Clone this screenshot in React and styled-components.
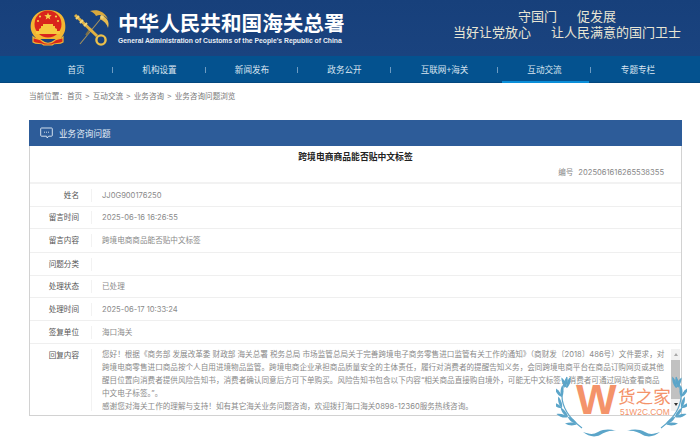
import React from 'react';
import styled, { createGlobalStyle } from 'styled-components';

const GlobalStyle = createGlobalStyle`
  html, body {
    margin: 0;
    padding: 0;
    background: #fff;
    overflow: hidden;
  }
  body {
    font-family: "Noto Sans CJK SC", "Noto Sans", sans-serif;
  }
`;

const navItems = ['首页', '机构设置', '新闻发布', '政务公开', '互联网+海关', '互动交流', '专题专栏'];

const crumbs = ['首页', '互动交流', '业务咨询', '业务咨询问题浏览'];

const rows = [
  { label: '姓名', value: 'JJ0G900176250', h: 23 },
  { label: '留言时间', value: '2025-06-16 16:26:55', h: 22 },
  { label: '留言内容', value: '跨境电商商品能否贴中文标签', h: 24 },
  { label: '问题分类', value: '', h: 23 },
  { label: '处理状态', value: '已处理', h: 22 },
  { label: '处理时间', value: '2025-06-17 10:33:24', h: 23 },
  { label: '签复单位', value: '海口海关', h: 23 },
];

// x, y, angle of each leaf on the left branch of the wreath
const leaves = [
  [11, 18, -72], [6, 27, -88], [6, 38, -108], [12, 47, -128], [21, 54, -142],
  [11, 18, -118], [6, 27, -128], [6, 38, -150], [12, 47, -165], [21, 54, -178],
];

const Emblem = () => (
  <svg width="37" height="38" viewBox="0 0 37 38">
    <path d="M7 30 C1 25 0 19 1 14 C3 5 10 1 18 1 C27 1 34 5 35 14 C36 20 35 25 30 30 Z" fill="#f2b632" />
    <circle cx="18" cy="15" r="13.5" fill="#d9251c" />
    <path d="M18 3.5l1 2.6 2.7.1-2.1 1.7.7 2.6-2.3-1.5-2.3 1.5.7-2.6-2.1-1.7 2.7-.1z" fill="#f6d14a" />
    <circle cx="10" cy="7.5" r="1.1" fill="#f6d14a" />
    <circle cx="26" cy="7.5" r="1.1" fill="#f6d14a" />
    <circle cx="8" cy="12" r="1.1" fill="#f6d14a" />
    <circle cx="28" cy="12" r="1.1" fill="#f6d14a" />
    <path d="M9 22h18v-2l-2-1v-2h-2v-2H13v2h-2v2l-2 1z" fill="#f6c93f" />
    <rect x="6" y="22" width="24" height="3" fill="#f6c93f" />
    <path d="M3 28 C6 31 10 29 12 32 C15 35 21 35 24 32 C26 29 30 31 33 28 L33 33 C29 36 25 33 22 36 L14 36 C11 33 7 36 3 33 Z" fill="#d9251c" stroke="#f2b632" strokeWidth="1.2" />
  </svg>
);

const CustomsKey = () => (
  <svg width="37" height="38" viewBox="0 0 37 38" fill="none">
    <path d="M29 7 L6 35" stroke="#a8935c" strokeWidth="1.1" />
    <path d="M17 19 L12 26" stroke="#7d7048" strokeWidth="2" />
    <path d="M1 6 L23 27" stroke="#e0b143" strokeWidth="3" />
    <path d="M2 10l3-3M6 14l3-3M10 17l3-3" stroke="#f3d576" strokeWidth="2" />
    <circle cx="27" cy="31" r="4.6" stroke="#ecc04a" strokeWidth="2.4" />
    <path d="M16 2 C23 0 30 2 34 10 C30 6 26 5 22 7 C21 5 19 3 16 2 Z" fill="#d9a93c" />
    <path d="M27 6 C33 8 36 13 34 19 C33 15 30 12 26 10 Z" fill="#e6bb50" />
    <circle cx="28" cy="8" r="1.8" fill="#f3d576" />
  </svg>
);

const ChatIcon = () => (
  <svg width="13" height="12" viewBox="0 0 13 12" fill="none">
    <path d="M1.5 1h10a.8.8 0 0 1 .8.8v6.6a.8.8 0 0 1-.8.8H8.6L7.2 11 6.6 9.2H1.5a.8.8 0 0 1-.8-.8V1.8a.8.8 0 0 1 .8-.8z" stroke="#e6eef7" strokeWidth="0.9" />
    <path d="M4 5.2h1M6 5.2h1M8 5.2h1" stroke="#e6eef7" strokeWidth="0.9" />
  </svg>
);

const Laurel = ({ flip }) => (
  <svg width="66" height="72" viewBox="0 0 66 72" fill="none" style={flip ? { transform: 'scaleX(-1)' } : undefined}>
    <path d="M11 7 C3 22 2 40 26 58" stroke="#5ba5c9" strokeWidth="1.2" />
    <path d="M11 7 C9 11 8 14 8 18 C11 15 13 11 11 7Z" fill="#5ba5c9" />
    {leaves.map(([x, y, a]) => (
      <path key={`${x}-${a}`} d="M0 0 C3 -2.2 8 -2.2 12 0 C8 1.8 3 1.8 0 0Z" fill="#5ba5c9" transform={`translate(${x} ${y}) rotate(${a})`} />
    ))}
    <path d="M27 62 C33 64 37 65 42 62 C48 59 54 59 60 61 C54 60 49 62 44 65 C38 68 32 66 27 62Z" fill="#5ba5c9" />
  </svg>
);

const App = () => (
  <Page>
    <GlobalStyle />
    <Header>
      <Logos>
        <Emblem />
        <CustomsKey />
      </Logos>
      <Brand>
        <BrandName>中华人民共和国海关总署</BrandName>
        <BrandEnglish>General Administration of Customs of the People's Republic of China</BrandEnglish>
      </Brand>
      <Slogan>
        <SloganLine $indent="65px">守国门<SloganGap />促发展</SloganLine>
        <SloganLine>当好让党放心<SloganGap />让人民满意的国门卫士</SloganLine>
      </Slogan>
    </Header>
    <Nav>
      {navItems.map((item, i) => (
        <NavItem key={item} $active={i === 5} $last={i === navItems.length - 1}>{item}</NavItem>
      ))}
    </Nav>
    <Breadcrumb>
      当前位置：
      {crumbs.map((crumb, i) => (
        <React.Fragment key={crumb}>
          {i > 0 && <CrumbSep>&gt;</CrumbSep>}
          <span>{crumb}</span>
        </React.Fragment>
      ))}
    </Breadcrumb>
    <Card>
      <CardHead>
        <ChatIcon />
        <span>业务咨询问题</span>
      </CardHead>
      <TitleBlock>
        <Title>跨境电商商品能否贴中文标签</Title>
        <Serial>编号<SerialNo>2025061616265538355</SerialNo></Serial>
      </TitleBlock>
      {rows.map((row) => (
        <Row key={row.label} $h={row.h}>
          <Label>{row.label}</Label>
          <Value>{row.value}</Value>
        </Row>
      ))}
      <ReplyRow>
        <Label>回复内容</Label>
        <ReplyBox>
          <ReplyText>
            <ReplyLine>您好！根据《商务部 发展改革委 财政部 海关总署 税务总局 市场监管总局关于完善跨境电子商务零售进口监管有关工作的通知》（商财发〔2018〕486号）文件要求，对</ReplyLine>
            <ReplyLine>跨境电商零售进口商品按个人自用进境物品监管。跨境电商企业承担商品质量安全的主体责任，履行对消费者的提醒告知义务，会同跨境电商平台在商品订购网页或其他</ReplyLine>
            <ReplyLine>醒目位置向消费者提供风险告知书，消费者确认同意后方可下单购买。风险告知书包含以下内容“相关商品直接购自境外，可能无中文标签，消费者可通过网站查看商品</ReplyLine>
            <ReplyLine>中文电子标签。”。</ReplyLine>
            <ReplyLine>感谢您对海关工作的理解与支持！如有其它海关业务问题咨询，欢迎拨打海口海关0898-12360服务热线咨询。</ReplyLine>
          </ReplyText>
          <ScrollBar>
            <ArrowUp />
            <Thumb />
            <ArrowDown />
          </ScrollBar>
        </ReplyBox>
      </ReplyRow>
    </Card>
    <Watermark>
      <WreathLeft><Laurel /></WreathLeft>
      <WreathRight><Laurel flip /></WreathRight>
      <WatermarkW>W</WatermarkW>
      <WatermarkName>货之家</WatermarkName>
      <WatermarkUrl>51W2C.COM</WatermarkUrl>
    </Watermark>
  </Page>
);

const Page = styled.div`
  position: relative;
  width: 700px;
  height: 446px;
  overflow: hidden;
  background: #fff;
`;

const Header = styled.header`
  height: 56px;
  box-sizing: border-box;
  padding: 9px 0 0 30px;
  display: flex;
  align-items: flex-start;
  background: linear-gradient(180deg, #17407b 0%, #1a437f 100%);
`;

const Logos = styled.div`
  width: 88px;
  display: flex;
  gap: 7px;
`;

const Brand = styled.div`
  width: 335px;
  color: #fff;
`;

const BrandName = styled.div`
  margin-top: 1px;
  font-family: "Noto Sans CJK SC", "Liberation Serif", serif;
  font-size: 20.6px;
  line-height: 24px;
  font-weight: 700;
  white-space: nowrap;
`;

const BrandEnglish = styled.div`
  margin-top: 3px;
  font-family: "Liberation Sans", sans-serif;
  font-size: 6.8px;
  line-height: 8px;
  font-weight: 700;
  white-space: nowrap;
  color: #e8edf4;
`;

const Slogan = styled.div`
  margin-top: -1px;
  color: #e9e6d4;
  font-size: 13px;
  line-height: 15.5px;
`;

const SloganLine = styled.div`
  white-space: nowrap;
  padding-left: ${(p) => p.$indent || 0};
`;

const SloganGap = styled.span`
  display: inline-block;
  width: 20px;
`;

const Nav = styled.nav`
  height: 27px;
  box-sizing: border-box;
  padding: 0 0 1px 39px;
  display: grid;
  grid-template-columns: 74px 93px 92px 93px 107px 93px 94px;
  background: #04528f;
  border-bottom: 1px solid #04477e;
`;

const NavItem = styled.div`
  position: relative;
  display: flex;
  align-items: center;
  justify-content: center;
  font-size: 8.6px;
  color: #dbe6f1;
  &::before {
    content: '';
    display: ${(p) => (p.$last ? 'none' : 'block')};
    position: absolute;
    right: 0;
    top: 11px;
    width: 1px;
    height: 6px;
    background: #6d9bc2;
  }
  &::after {
    content: '';
    display: ${(p) => (p.$active ? 'block' : 'none')};
    position: absolute;
    left: 4px;
    right: 2px;
    bottom: -2px;
    height: 2px;
    background: #0b8ed8;
  }
`;

const Breadcrumb = styled.div`
  height: 37px;
  box-sizing: border-box;
  padding: 7px 0 0 29px;
  font-size: 7.6px;
  line-height: 11px;
  color: #777;
  white-space: nowrap;
`;

const CrumbSep = styled.span`
  margin: 0 3.2px;
`;

const Card = styled.section`
  width: 653px;
  height: 296px;
  margin-left: 29px;
  box-sizing: border-box;
  border: 1px solid #d2d2d2;
  border-top: none;
  display: flex;
  flex-direction: column;
  font-family: Inter, "Noto Sans CJK SC", sans-serif;
`;

const CardHead = styled.div`
  flex: none;
  height: 26px;
  margin: 0 -1px;
  padding-left: 11px;
  display: flex;
  align-items: center;
  gap: 6px;
  background: #2d5c99;
  color: #e6eef7;
  font-size: 8.6px;
`;

const TitleBlock = styled.div`
  flex: none;
  height: 38px;
  box-sizing: border-box;
  padding-top: 5px;
  border-bottom: 2px solid #f2f2f2;
`;

const Title = styled.div`
  text-align: center;
  font-size: 8.8px;
  line-height: 12px;
  font-weight: 700;
  color: #222;
`;

const Serial = styled.div`
  margin-top: 4px;
  padding-right: 17px;
  text-align: right;
  font-size: 7.6px;
  line-height: 11px;
  color: #888;
`;

const SerialNo = styled.span`
  margin-left: 5px;
`;

const Row = styled.div`
  flex: none;
  height: ${(p) => p.$h}px;
  box-sizing: border-box;
  display: flex;
  align-items: center;
  border-bottom: 1px solid #efefef;
`;

const Label = styled.div`
  flex: none;
  width: 49px;
  text-align: right;
  font-size: 7.6px;
  line-height: 11px;
  color: #555;
`;

const Value = styled.div`
  margin-left: 12px;
  padding-left: 10px;
  min-height: 13px;
  border-left: 1px solid #f2f2f2;
  font-size: 7.6px;
  line-height: 13px;
  color: #8a8a8a;
  white-space: nowrap;
`;

const ReplyRow = styled.div`
  flex: 1;
  min-height: 0;
  display: flex;
  align-items: flex-start;
  padding-top: 5px;
  box-sizing: border-box;
  ${Label} {
    margin-top: 1px;
  }
`;

const ReplyBox = styled.div`
  position: relative;
  flex: 1;
  min-width: 0;
  height: 62px;
  margin-left: 12px;
  border-left: 1px solid #f2f2f2;
  overflow: hidden;
`;

const ReplyText = styled.div`
  padding-left: 10px;
  font-size: 7.6px;
  line-height: 12.9px;
  color: #8a8a8a;
`;

const ReplyLine = styled.div`
  white-space: nowrap;
`;

const ScrollBar = styled.div`
  position: absolute;
  top: 0;
  right: 1px;
  bottom: 0;
  width: 9px;
  display: flex;
  flex-direction: column;
  align-items: center;
  background: #f1f1f1;
`;

const ArrowUp = styled.div`
  flex: none;
  width: 0;
  height: 0;
  margin: 4px 0;
  border-left: 2.5px solid transparent;
  border-right: 2.5px solid transparent;
  border-bottom: 3px solid #a8a8a8;
`;

const Thumb = styled.div`
  flex: none;
  width: 100%;
  height: 39px;
  background: #c1c1c1;
`;

const ArrowDown = styled.div`
  flex: none;
  width: 0;
  height: 0;
  margin-top: 4px;
  border-left: 2.5px solid transparent;
  border-right: 2.5px solid transparent;
  border-top: 3px solid #333;
`;

const Watermark = styled.div`
  position: absolute;
  left: 550px;
  top: 370px;
  width: 150px;
  height: 76px;
  pointer-events: none;
`;

const WreathLeft = styled.div`
  position: absolute;
  left: 6px;
  top: 0;
`;

const WreathRight = styled.div`
  position: absolute;
  left: 71px;
  top: 0;
`;

const WatermarkW = styled.div`
  position: absolute;
  left: 26px;
  top: 9px;
  font-family: "Liberation Sans", sans-serif;
  font-size: 43px;
  line-height: 40px;
  font-weight: 700;
  color: #f4936a;
`;

const WatermarkName = styled.div`
  position: absolute;
  left: 68px;
  top: 16px;
  font-size: 17.6px;
  line-height: 20px;
  color: #f4936a;
  white-space: nowrap;
`;

const WatermarkUrl = styled.div`
  position: absolute;
  left: 70px;
  top: 37px;
  font-family: "Liberation Sans", sans-serif;
  font-size: 8.4px;
  line-height: 10px;
  color: #f4936a;
  white-space: nowrap;
`;

export default App;
